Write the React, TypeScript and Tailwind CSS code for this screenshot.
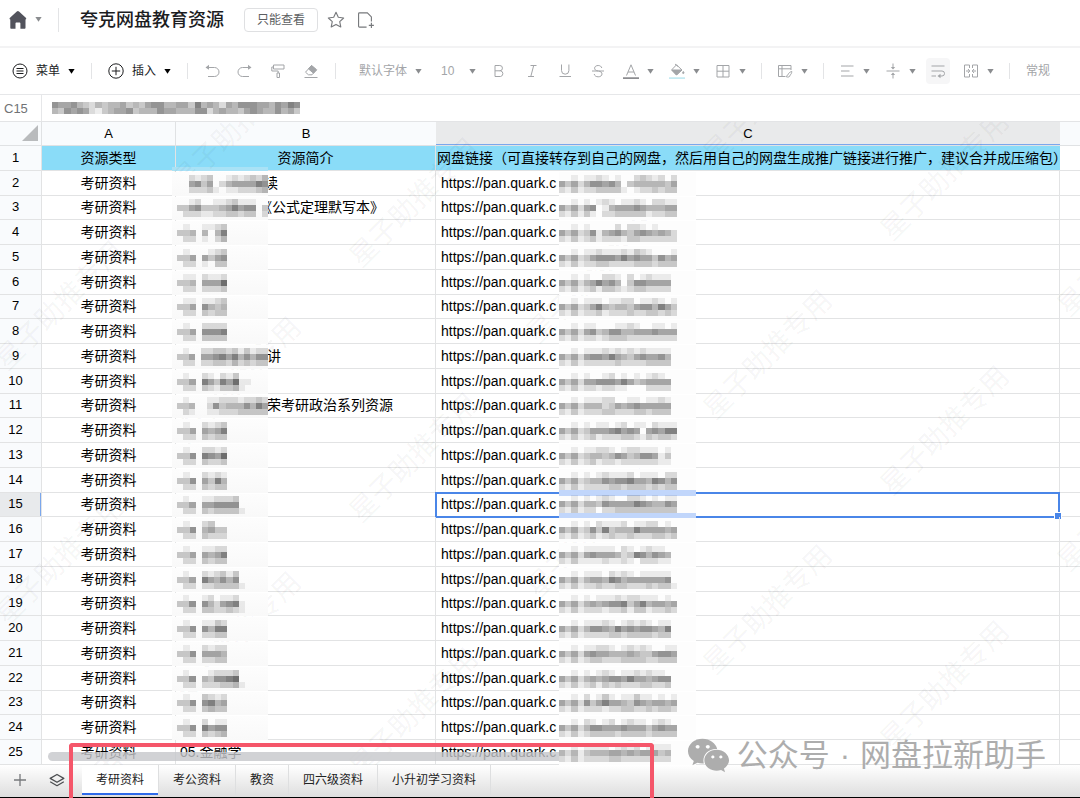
import type { ReactNode } from 'react';
import clsx from 'clsx';
import { FaWeixin } from 'react-icons/fa';

const URL_TEXT = 'https://pan.quark.c';

// One string per line of blocks, each digit is the darkness of a block (0 = none)
type Blocks = string[];

interface Row {
  name?: string;
  indent?: string;
  nameBlocks?: Blocks;
  urlBlocks: Blocks;
}

const ROWS: Row[] = [
  { name: '读', indent: 'pl-[88px]', nameBlocks: ['002123001212324', '005635024555576', '002223101122234'], urlBlocks: ['0010112101002321202', '5352466564034444435', '2131223333101223233'] },
  { name: '《公式定理默写本》', indent: 'pl-[82px]', nameBlocks: ['001200112311100', '335633345756603', '022211223323302'], urlBlocks: ['0010101210112102211', '5352560145556544455', '2131310223333312233'] },
  { nameBlocks: ['01001123', '33404047', '02201024'], urlBlocks: ['0010100002022101000', '5352361456435654542', '2131231222133222222'] },
  { nameBlocks: ['01000123', '33505356', '02201033'], urlBlocks: ['0010112111213210001', '5352356665756553645', '2131223322223332333'] },
  { nameBlocks: ['01102112', '33405558', '02202223'], urlBlocks: ['0010100221020121110', '5352457564036655550', '2131231332123322220'] },
  { nameBlocks: ['01101123', '33506434', '02203233'], urlBlocks: ['0010111011220112101', '5352357434435664753', '2131223122232233232'] },
  { nameBlocks: ['01002222', '33506667', '02203333'], urlBlocks: ['0010110001121001101', '5352563466445556555', '2131221233322222222'] },
  { name: '讲', indent: 'pl-[91px]', nameBlocks: ['010022332313122', '335055675746466', '022022332423233'], urlBlocks: ['0010111212121211110', '5352566575435655640', '2131222223222233330'] },
  { nameBlocks: ['010021021300', '335075375811', '022032133410'], urlBlocks: ['0010100120101012100', '5352556665753455550', '2131221221100022220'] },
  { name: '荣考研政治系列资源', indent: 'pl-[91px]', nameBlocks: ['010001122212232', '334002634446475', '021001122233333'], urlBlocks: ['0010111220011011210', '5352444235456555550', '2131222332223323330'] },
  { nameBlocks: ['01002123', '33505457', '02203233'], urlBlocks: ['0010101101201102111', '5352355567565056577', '2131231222332132332'] },
  { nameBlocks: ['01002212', '33607658', '02203223'], urlBlocks: ['0010112210122111010', '5352344346534665130', '2131231221222222110'] },
  { nameBlocks: ['01002121', '33605374', '02203233'], urlBlocks: ['0010101211120111022', '5352344656675547646', '2131222233233323233'] },
  { nameBlocks: ['01001122230', '33505566660', '02203233331'], urlBlocks: ['0010101210022101011', '5352443655557654465', '2131220223333333333'] },
  { nameBlocks: ['01002300', '33604533', '02203222'], urlBlocks: ['0010102111201122010', '5352363734447555545', '2131231232232223323'] },
  { nameBlocks: ['01001122', '33505457', '02203233'], urlBlocks: ['0010111110210121100', '5352565554237646540', '2131111211210222110'] },
  { nameBlocks: ['01002123130', '33507546460', '02202233331'], urlBlocks: ['0010111021210111110', '5352455476455555560', '2131223223322232331'] },
  { nameBlocks: ['01001201120', '33606425671', '02203322321'], urlBlocks: ['0010101112122111010', '5352454566735745545', '2131222122313312232'] },
  { nameBlocks: ['01001132', '33606477', '02202233'], urlBlocks: ['0010111210121210110', '5352466547565665470', '2131222233233332330'] },
  { nameBlocks: ['01002122', '33605554', '02202233'], urlBlocks: ['0010112210121210011', '5352565544454335665', '2131233222333322333'] },
  { nameBlocks: ['01000122230', '33604366780', '02202223341'], urlBlocks: ['0010101210112121100', '5352454566575545660', '2131231323222332230'] },
  { nameBlocks: ['01003212', '33606745', '02203433'], urlBlocks: ['0010201310113110101', '5352635755436545545', '2131222122332232332'] },
  { nameBlocks: ['01002011', '33607566', '02203234'], urlBlocks: ['0010210120121101210', '5352466555655535655', '2131233332333323333'] },
  { name: '05.金融学', indent: 'pl-1', urlBlocks: ['0010111101212011110', '4241344455454555340', '2131222233222222220'] },
];

const FORMULA_BLOCKS: Blocks = [
  '6556432434453435664455374542546665546576',
  '4365652134556344465544466245443565446453',
];

const SHEET_TABS = ['考研资料', '考公资料', '教资', '四六级资料', '小升初学习资料'];

const WATERMARKS = Array.from({ length: 7 }, (_, col) => {
  const first = ((51 + 76 * col) % 255) - 122;
  return [0, 1, 2, 3].map((n) => ({ x: 60 + 177 * col, y: first + 255 * n }));
}).flat();

function Mosaic({ blocks, className }: { blocks: Blocks; className: string }) {
  return (
    <svg
      className={className}
      viewBox={`0 0 ${blocks[0].length} ${blocks.length}`}
      preserveAspectRatio="none"
      shapeRendering="crispEdges"
      aria-hidden="true"
    >
      {blocks.map((line, y) =>
        [...line].map((d, x) =>
          d === '0' ? null : <rect key={`${x}-${y}`} x={x} y={y} width="1" height="1" fillOpacity={Number(d) * 0.07} />,
        ),
      )}
    </svg>
  );
}

function Caret({ className = 'text-[#8a8c8f]' }: { className?: string }) {
  return (
    <svg className={clsx('h-[5px] w-[7px] shrink-0', className)} viewBox="0 0 7 5" fill="currentColor" aria-hidden="true">
      <path d="M0.4 0h6.2L3.5 4.8z" />
    </svg>
  );
}

function Icon({ children, className = 'size-4' }: { children: ReactNode; className?: string }) {
  return (
    <svg className={clsx('shrink-0', className)} viewBox="0 0 16 16" fill="none" stroke="currentColor" strokeWidth="1" aria-hidden="true">
      {children}
    </svg>
  );
}

function Tool({ label, caret, children }: { label: string; caret?: boolean; children: ReactNode }) {
  return (
    <button type="button" aria-label={label} className="flex shrink-0 items-center gap-2">
      <Icon>{children}</Icon>
      {caret && <Caret />}
    </button>
  );
}

function Sep({ className = 'mx-[15px]' }: { className?: string }) {
  return <span className={clsx('h-4 w-px shrink-0 bg-[#e3e4e6]', className)} />;
}

function TitleBar() {
  return (
    <header className="flex h-12 shrink-0 items-center border-b-2 border-[#f3f3f4] pb-[7px] pl-2">
      <button type="button" aria-label="首页" className="flex items-center gap-[7px] text-[#52535c]">
        <svg className="size-5" viewBox="0 0 20 20" fill="currentColor" aria-hidden="true">
          <path d="M8.800 1.600a1.600 1.600 0 0 1 2.200 0l6.800 6.200c.8.8.4 1.700-.3 1.700v8.300c0 .6-.4 1-1 1h-4.100v-5.300c0-.6-.4-1-1-1H8.500c-.6 0-1 .4-1 1v5.300H3.300c-.6 0-1-.4-1-1V9.500c-.8 0-1.100-1-.3-1.700z" />
        </svg>
        <Caret />
      </button>
      <Sep className="mr-[21px] ml-4 h-6" />
      <h1 className="text-lg leading-6 font-medium text-[#1c1d1f]">夸克网盘教育资源</h1>
      <button type="button" className="ml-5 h-6 rounded border border-[#dfe0e2] px-3 text-xs text-[#5c5e61]">
        只能查看
      </button>
      <button type="button" aria-label="收藏" className="ml-[9px] text-[#77797c]">
        <Icon className="size-[18px]">
          <path d="M8 1.200l2.050 4.400 4.750.6-3.500 3.250.95 4.750L8 11.900l-4.250 2.300.95-4.750L1.200 6.200l4.750-.6z" strokeLinejoin="round" />
        </Icon>
      </button>
      <button type="button" aria-label="添加到文件夹" className="ml-3 text-[#77797c]">
        <Icon className="size-[18px]">
          <path d="M8.500 14.300H2.200c-.5 0-.8-.3-.8-.8v-11c0-.5.3-.8.8-.8h7l3.600 3.600v4M12.800 10.500v4.500M10.500 12.800H15" />
        </Icon>
      </button>
    </header>
  );
}

function Toolbar() {
  return (
    <div className="flex h-[47px] shrink-0 items-center overflow-hidden border-b border-[#e6e7e9] pl-3 text-xs whitespace-nowrap text-[#a3a5a8]">
      <button type="button" className="flex shrink-0 items-center gap-2 text-[#1c1d1f]">
        <Icon>
          <circle cx="8" cy="8" r="7" />
          <path d="M4.500 5.500h7M4.500 8h7M4.500 10.500h7" />
        </Icon>
        菜单
        <Caret className="text-black" />
      </button>
      <Sep className="mx-4" />
      <button type="button" className="flex shrink-0 items-center gap-2 text-[#1c1d1f]">
        <Icon>
          <circle cx="8" cy="8" r="7.200" />
          <path d="M3.800 8h8.400M8 3.800v8.400" />
        </Icon>
        插入
        <Caret className="text-black" />
      </button>
      <Sep className="mx-4" />
      <div className="flex gap-[17px]">
        <Tool label="撤销">
          <path d="M2.500 4.500h8a4 4 0 0 1 0 9H4" />
          <path d="M5 1.800L1.500 4.500 5 6.800z" fill="currentColor" stroke="none" />
        </Tool>
        <Tool label="重做">
          <path d="M13.500 4.500h-8a4 4 0 0 0 0 9H12" />
          <path d="M11 1.800l3.500 2.700L11 6.800z" fill="currentColor" stroke="none" />
        </Tool>
        <Tool label="格式刷">
          <path d="M3.500 2h10.500v4h-10.500zM3.500 4H1.800v4h6.400v2M7 10h2.500v4.500H7z" />
        </Tool>
        <Tool label="清除格式">
          <path d="M8.500 2.500l5 4.300-4.500 5H5.500L2.500 9.200z" />
          <path d="M8.500 2.500l5 4.300-3 3.400-5-4.300z" fill="currentColor" />
          <path d="M1.500 14.500h13" />
        </Tool>
      </div>
      <Sep className="mx-4" />
      <label className="flex items-center gap-[6px] pl-[7px]">
        <select aria-label="字体" className="w-[50px] appearance-none bg-transparent outline-none">
          <option>默认字体</option>
        </select>
        <Caret />
      </label>
      <label className="ml-[19px] flex items-center gap-[10px]">
        <select aria-label="字号" className="w-[18px] appearance-none bg-transparent outline-none">
          <option>10</option>
        </select>
        <Caret />
      </label>
      <div className="ml-[15px] flex gap-[17px]">
        <Tool label="加粗">
          <path d="M4 2.500v11h5.500a2.900 2.900 0 0 0 0-5.700H4M4 2.500h4.800a2.600 2.600 0 0 1 0 5.300" />
        </Tool>
        <Tool label="斜体">
          <path d="M6.500 2.500H12.500M4 13.500h6M9.700 2.500L6.800 13.500" />
        </Tool>
        <Tool label="下划线">
          <path d="M4.500 1.500v6a3.700 3.700 0 0 0 7.400 0v-6M2.500 13.500h11.500" />
        </Tool>
        <Tool label="删除线">
          <path d="M11.800 5C11.300 3.300 10 2.500 8.200 2.500c-2 0-3.600 1-3.600 2.700 0 1.400 1 2.300 3.400 2.800M2 8h12M8.500 8c2.300.5 3.500 1.400 3.500 3 0 1.700-1.600 2.800-3.800 2.800-2 0-3.600-.9-4-2.800" />
        </Tool>
      </div>
      <div className="ml-[17px] flex gap-[15px]">
        <Tool label="字体颜色" caret>
          <path d="M3.500 12.500L8 1.800l4.500 10.700M5 9h6" />
          <path d="M0 16h16" stroke="#8c8d90" strokeWidth="3.500" />
        </Tool>
        <Tool label="填充颜色" caret>
          <path d="M7.500 1.800L2.500 7l5 5 5.500-5zM6 1l3 2.500" />
          <path d="M3 7h9.500l-5 5z" fill="currentColor" />
          <path d="M14.300 8.500c.8 1 1 2-.1 2-.9 0-.7-1 .1-2z" fill="currentColor" />
          <path d="M0 16h16" stroke="#c5eaf2" strokeWidth="3.500" />
        </Tool>
        <Tool label="边框" caret>
          <path d="M2 2.500h12v11.500H2zM8 2.500V14M2 8.200h12" />
        </Tool>
      </div>
      <Sep />
      <Tool label="冻结" caret>
        <path d="M8.500 13.500H1.500v-11h12.500V7M1.500 5.800H14M5 2.500v11" />
        <path d="M14.800 8.500c-2 .5-3.300 1.600-3.600 3-1.200.2-.9 1.700-2 2.200 2 .8 3.900.2 3.800-1.500 1.200-.8 1.700-2.200 1.800-3.700z" />
      </Tool>
      <Sep />
      <div className="flex gap-[15px]">
        <Tool label="水平对齐" caret>
          <path d="M2 3h12.500M2 8h8.500M2 13h12.500" />
        </Tool>
        <Tool label="垂直对齐" caret>
          <path d="M1.500 8h13M8 0.500v5M8 15.500v-5" />
          <path d="M5.800 4L8 6.500 10.200 4zM5.800 12L8 9.500l2.200 2.500z" fill="currentColor" stroke="none" />
        </Tool>
      </div>
      <div className="ml-[10px] flex h-[26px] w-6 shrink-0 items-center justify-center rounded-sm bg-[#f6f6f7]">
        <Tool label="自动换行">
          <path d="M1.500 3h13M1.500 8H12a2.400 2.400 0 0 1 0 5H9.500M1.500 13H6" />
          <path d="M10.500 10.700v4.600L7.500 13z" fill="currentColor" stroke="none" />
        </Tool>
      </div>
      <div className="ml-[13px] flex">
        <Tool label="合并单元格" caret>
          <path d="M6.500 2H1.500v12h5v-3M9.500 11v3h5V2h-5v3M6.500 2v3M3 8h3.500M13 8H9.500M5 6l1.800 2L5 10M11 6L9.200 8l1.800 2" />
        </Tool>
      </div>
      <Sep />
      <button type="button" className="shrink-0 pl-px">常规</button>
    </div>
  );
}

function FormulaBar() {
  return (
    <div className="flex h-[27px] shrink-0 items-center border-b border-[#e3e4e6]">
      <input
        aria-label="单元格"
        defaultValue="C15"
        className="h-full w-[42px] shrink-0 border-r border-[#e6e7e9] pl-1 text-[13px] text-[#717375] outline-none"
      />
      <Mosaic blocks={FORMULA_BLOCKS} className="ml-[10px] h-3 w-[248px]" />
    </div>
  );
}

function Sheet() {
  return (
    <main className="relative min-h-0 flex-1 overflow-hidden">
      <table className="h-full w-full table-fixed border-separate border-spacing-0 text-sm leading-5 text-black">
        <colgroup>
          <col className="w-[42px]" />
          <col className="w-[134px]" />
          <col className="w-[260px]" />
          <col className="w-[624px]" />
          <col />
        </colgroup>
        <thead>
          <tr className="h-6 bg-[#f9fbfd] text-[13px] *:border-b *:border-[#e0e2e4] *:p-0 *:font-normal">
            <th className="relative border-r">
              <svg className="absolute right-[3px] bottom-1 size-4" viewBox="0 0 16 16" aria-hidden="true">
                <path d="M16 0v16H0z" fill="#b9bbbd" />
              </svg>
            </th>
            <th scope="col" className="border-r">A</th>
            <th scope="col">B</th>
            <th scope="col" className="bg-[#e9eaeb] shadow-[inset_0_-1px_#7ba7ec]">C</th>
            <th></th>
          </tr>
        </thead>
        <tbody className="*:*:border-b *:*:border-[#e2e3e4] *:*:p-0 *:*:whitespace-nowrap">
          <tr>
            <th scope="row" className="border-r bg-[#f9fbfd] text-[13px] font-normal">
              <div className="pr-[10px]">1</div>
            </th>
            <td className="border-r bg-[#8adcf8] text-center">资源类型</td>
            <td className="relative border-r bg-[#8adcf8] text-center">
              资源简介
              <span className="absolute -bottom-px -left-1 h-1 w-24 bg-[#a9e2f6]" />
            </td>
            <td className="bg-[#8adcf8]">
              <div className="pl-px">网盘链接（可直接转存到自己的网盘，然后用自己的网盘生成推广链接进行推广，建议合并成压缩包）</div>
            </td>
            <td></td>
          </tr>
          {ROWS.map((row, i) => {
            const n = i + 2;
            const selected = n === 15;
            return (
              <tr key={n}>
                <th
                  scope="row"
                  className={clsx('border-r text-[13px] font-normal', selected ? 'bg-[#e8eaec] shadow-[inset_-1px_0_#7ba7ec]' : 'bg-[#f9fbfd]')}
                >
                  <div className="pr-[10px]">{n}</div>
                </th>
                <td className="border-r text-center">考研资料</td>
                <td className="relative border-r">
                  {row.name ? <div className={row.indent}>{row.name}</div> : null}
                  {row.nameBlocks && (
                    <div className="absolute -bottom-px -left-1 z-10 flex h-full w-24 items-center bg-linear-to-b from-[#fdfdfd] to-[#f9f9f9] pl-[5px]">
                      <Mosaic
                        blocks={row.nameBlocks}
                        className={clsx(
                          'h-[18px]',
                          row.nameBlocks[0].length === 8 && 'w-[50px]',
                          row.nameBlocks[0].length === 11 && 'w-[68px]',
                          row.nameBlocks[0].length === 12 && 'w-[74px]',
                          row.nameBlocks[0].length === 15 && 'w-[91px]',
                        )}
                      />
                    </div>
                  )}
                </td>
                <td className="relative border-r">
                  {selected && (
                    <span className="absolute -inset-px -bottom-[2px] border-2 border-[#4a86e8]">
                      <span className="absolute -right-[3px] -bottom-[3px] size-[6px] bg-[#4a86e8] ring-1 ring-white" />
                    </span>
                  )}
                  <div className="pl-[5px]">{URL_TEXT}</div>
                  <div
                    className={clsx(
                      'absolute left-[123px] z-10 flex w-[137px] items-center bg-[#fdfdfd]',
                      selected ? '-inset-y-[3px] border-y-[6px] border-[#c1d6fb]' : '-bottom-px h-full',
                    )}
                  >
                    <Mosaic blocks={row.urlBlocks} className="h-[18px] w-[118px]" />
                  </div>
                </td>
                <td></td>
              </tr>
            );
          })}
        </tbody>
      </table>

      <div className="pointer-events-none absolute inset-0 overflow-hidden" aria-hidden="true">
        {WATERMARKS.map(({ x, y }) => (
          <span
            key={`${x}-${y}`}
            className="absolute -translate-1/2 -rotate-45 text-[28px] leading-8 whitespace-nowrap text-black/5"
            style={{ left: x, top: y }}
          >
            星子助推专用
          </span>
        ))}
      </div>

      {/* horizontal scrollbar */}
      <div className="absolute bottom-1 left-12 h-[9px] w-[628px] rounded-full bg-[#c6c7ca]/80" />
    </main>
  );
}

function SheetTabs() {
  return (
    <footer className="relative flex h-[33px] shrink-0 items-start border-b border-black bg-linear-to-b from-white to-[#dedede] text-xs text-[#222]">
      <button type="button" aria-label="新建工作表" className="ml-3 flex h-[30px] items-center text-[#77797c]">
        <Icon>
          <path d="M8 2v12M2 8h12" strokeWidth="1.300" />
        </Icon>
      </button>
      <button type="button" aria-label="全部工作表" className="ml-[21px] flex h-[30px] items-center text-[#4c4e51]">
        <Icon>
          <path d="M8 2.500l6.800 3.900L8 10.300 1.200 6.400zM1.200 9.800L8 13.700l6.800-3.900" strokeWidth="1.300" strokeLinejoin="round" />
        </Icon>
      </button>
      <nav className="ml-[17px] flex">
        {SHEET_TABS.map((tab, i) => (
          <button
            key={tab}
            type="button"
            className={clsx(
              'h-[30px] border-r border-[#dedfe0] px-[14px]',
              i === 0 && 'bg-white shadow-[inset_0_-2px_#2f6bea]',
            )}
          >
            {tab}
          </button>
        ))}
      </nav>

      <div className="pointer-events-none absolute -top-[22px] -bottom-px left-[69px] z-20 w-[585px] rounded-t border-4 border-b-0 border-[#f5566a]" />
      <div className="absolute -top-[31px] right-[34px] z-20 flex items-center gap-[7px] text-[31px] leading-10 whitespace-nowrap text-[#adadad]">
        <FaWeixin className="size-[43px]" />
        <span>
          公众号<span className="mx-[10px]">·</span>网盘拉新助手
        </span>
      </div>
    </footer>
  );
}

export default function App() {
  return (
    <div className="flex h-screen flex-col overflow-hidden bg-white font-['Liberation_Sans','Noto_Sans_CJK_SC',sans-serif]">
      <TitleBar />
      <Toolbar />
      <FormulaBar />
      <Sheet />
      <SheetTabs />
    </div>
  );
}
